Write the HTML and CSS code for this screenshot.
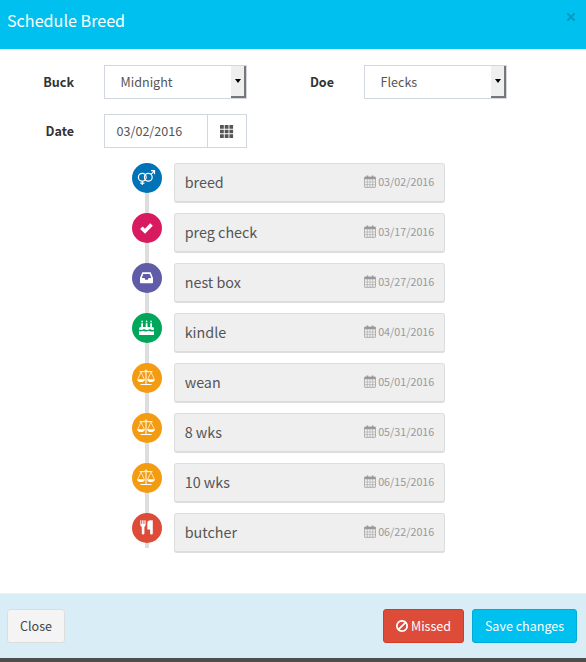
FILE: index.html
```html
<!DOCTYPE html>
<html lang="en">
<head>
<meta charset="utf-8">
<title>Schedule Breed</title>
<link rel="stylesheet" href="styles.css">
</head>
<body>
<svg class="defs" width="0" height="0">
  <symbol id="calendar" viewBox="0 0 12 13">
    <path d="M1 2h10q.6 0 .6.6v9q0 .7-.6.7H1q-.6 0-.6-.7v-9Q.4 2 1 2z" fill="none" stroke="currentColor" stroke-width=".8"/>
    <path d="M.5 2h11v2.200H.5zM2.600.4h1.600v3H2.600zM7.800.4h1.600v3H7.800z" fill="currentColor"/>
    <path d="M3.300 4v8M6 4v8M8.700 4v8M.5 7h11M.5 9.600h11" fill="none" stroke="currentColor" stroke-width=".5"/>
  </symbol>
  <symbol id="scale" viewBox="0 0 30 30">
    <g fill="none" stroke="#fff" stroke-width="1">
      <circle cx="14" cy="7.900" r=".9"/>
      <path d="M7.500 8.700h5.600M14.900 8.700h5.600M14 9v12.500M8.500 21.500h11"/>
      <path d="M9 9.200l-3.300 7M9 9.200l3.300 7M19 9.200l-3.300 7M19 9.200l3.300 7" stroke-width=".7"/>
    </g>
    <path d="M5 16.300h8q-.5 2.800-4 2.800t-4-2.800zM15 16.300h8q-.5 2.800-4 2.800t-4-2.800z" fill="#fff"/>
  </symbol>
</svg>
<div class="modal">
  <header class="modal-header">
    <h4>Schedule Breed</h4>
    <svg class="close" viewBox="0 0 10 10"><path d="M1.400 1.400l7.200 7.200M8.600 1.400L1.400 8.600"/></svg>
  </header>
  <main class="modal-body">
    <div class="form">
      <label>Buck</label>
      <div class="select"><span>Midnight</span><i class="arrow"></i></div>
      <label>Doe</label>
      <div class="select"><span>Flecks</span><i class="arrow"></i></div>
      <label>Date</label>
      <div class="date"><span>03/02/2016</span>
        <div class="addon"><svg width="14" height="13" viewBox="0 0 14 13"><path d="M0 0h3.800v3.700H0zM4.700 0h3.800v3.700H4.700zM9.400 0h3.700v3.700H9.400zM0 4.700h3.800v3.600H0zM4.700 4.700h3.800v3.600H4.700zM9.400 4.700h3.700v3.600H9.400zM0 9.300h3.800V13H0zM4.700 9.300h3.800V13H4.700zM9.400 9.300h3.700V13H9.400z" fill="#555"/></svg></div>
      </div>
    </div>
    <ul class="timeline">
      <li><svg class="dot blue" viewBox="0 0 30 30"><g fill="none" stroke="#fff" stroke-width="1.200"><circle cx="10.300" cy="14.200" r="3.900"/><circle cx="16.300" cy="14.200" r="3.900"/><path d="M10.300 18.100v4M8.200 20.200h4.200M19.100 11.400l3.300-3.500M19 7.700h3.500v3.500"/></g></svg>
        <div class="item"><span>breed</span><time><svg><use href="#calendar"/></svg>03/02/2016</time></div></li>
      <li><svg class="dot pink" viewBox="0 0 30 30"><path d="M9.400 14.700l3.600 3.500 6.500-6.700" fill="none" stroke="#fff" stroke-width="3.600"/></svg>
        <div class="item"><span>preg check</span><time><svg><use href="#calendar"/></svg>03/17/2016</time></div></li>
      <li><svg class="dot purple" viewBox="0 0 30 30"><path fill="#fff" fill-rule="evenodd" d="M10.300 9.300h8.400l2.300 5.700v4.500q0 .7-.7.700H8.700q-.7 0-.7-.7V15zM11.300 11L9.800 15h2.700l.8 1.800h2.500l.8-1.800h2.700L17.700 11z"/></svg>
        <div class="item"><span>nest box</span><time><svg><use href="#calendar"/></svg>03/27/2016</time></div></li>
      <li><svg class="dot green" viewBox="0 0 30 30"><path fill="#fff" d="M9.200 10.300h1.800V14H9.200zM13.700 10.300h1.800V14h-1.800zM18.200 10.300H20V14h-1.800zM9.300 9.300q-.3-.8.800-2 1.100 1.200.8 2zM13.800 9.300q-.3-.8.800-2 1.100 1.200.8 2zM18.300 9.300q-.3-.8.800-2 1.100 1.200.8 2zM7 15.500q0-1.500 1.500-1.500h12q1.500 0 1.500 1.500v1q-1.500 1.200-3 0-1-.8-2 0-2 1.200-4 0-1-.8-2 0-2 1.200-4 0zM7 18q2 1 3.700-.2 1 0 1.800.5 2 .7 4-.5 1 0 1.800.5 1.800.7 3.700-.3v4H7z"/></svg>
        <div class="item"><span>kindle</span><time><svg><use href="#calendar"/></svg>04/01/2016</time></div></li>
      <li><svg class="dot orange" viewBox="0 0 30 30"><use href="#scale"/></svg>
        <div class="item"><span>wean</span><time><svg><use href="#calendar"/></svg>05/01/2016</time></div></li>
      <li><svg class="dot orange" viewBox="0 0 30 30"><use href="#scale"/></svg>
        <div class="item"><span>8 wks</span><time><svg><use href="#calendar"/></svg>05/31/2016</time></div></li>
      <li><svg class="dot orange" viewBox="0 0 30 30"><use href="#scale"/></svg>
        <div class="item"><span>10 wks</span><time><svg><use href="#calendar"/></svg>06/15/2016</time></div></li>
      <li><svg class="dot red" viewBox="0 0 30 30"><path fill="#fff" d="M8.300 7.300h1V11h.9V7.300h1.300V11h.9V7.300h1.200V12q0 1.300-1.200 1.900v6.500q0 1.100-1.300 1.100t-1.300-1.100v-6.500Q8.300 13.300 8.300 12zM20.800 7.300v13.100q0 1.100-1.300 1.100t-1.400-1.100v-4h-2.800V10.500q0-3.200 3.200-3.200z"/></svg>
        <div class="item"><span>butcher</span><time><svg><use href="#calendar"/></svg>06/22/2016</time></div></li>
    </ul>
  </main>
  <footer class="modal-footer">
    <button class="btn close-btn">Close</button>
    <button class="btn danger"><svg viewBox="128 128 1536 1536"><path fill="#fff" d="M1440 893q0-161-87-295l-754 753q137 89 297 89 111 0 211.500-43.500t173.500-116.500 116-174.500 43-212.500zm-999 299l755-754q-135-91-300-91-148 0-273 73t-198 199-73 274q0 162 89 299zm1223-299q0 157-61 300t-163.500 246-245 164-298.500 61-298.500-61-245-164-163.500-246-61-300 61-299.500 163.500-245.500 245-164 298.500-61 298.500 61 245 164 163.500 245.500 61 299.500z"/></svg>Missed</button>
    <button class="btn info">Save changes</button>
  </footer>
</div>
</body>
</html>
```
FILE: styles.css
```css
* { box-sizing: border-box; }
body {
  margin: 0;
  height: 662px;
  overflow: hidden;
  background: #4d4d4d;
  font: 12.55px/20px "Noto Sans CJK SC", "Open Sans", sans-serif;
  color: #333;
}
.defs { position: absolute; }
.modal {
  display: flex;
  flex-direction: column;
  height: 658px;
  background: #fff;
}
.modal-header {
  display: flex;
  justify-content: space-between;
  height: 49px;
  padding: 8px 10px 0 7px;
  background: #00c0ef;
  color: #fff;
}
h4 { margin: 0; font-size: 16.15px; font-weight: 400; line-height: 25px; }
.close { width: 10px; height: 10px; margin-top: 4px; }
.close path { stroke: #0099bf; stroke-width: 2; }
.modal-body { flex: 1; padding-top: 16px; }
.form {
  display: grid;
  grid-template-columns: 74px 143px 57px 143px;
  column-gap: 30px;
  row-gap: 15px;
}
label { text-align: right; font-weight: 700; line-height: 33px; }
.select, .date {
  display: flex;
  height: 34px;
  border: 1px solid #d2d6de;
  line-height: 32px;
  color: #555;
}
.select { justify-content: space-between; padding-left: 15.600px; }
.date { justify-content: space-between; padding-left: 11.600px; }
.arrow {
  display: flex;
  align-items: center;
  justify-content: center;
  width: 15px;
  background: #efefef;
  border: solid #777;
  border-width: 0 2px 2px 0;
}
.arrow::before {
  content: "";
  border: solid transparent;
  border-width: 4px 3.500px 0;
  border-top-color: #000;
}
.addon {
  display: flex;
  align-items: center;
  justify-content: center;
  width: 39px;
  padding-top: 1px;
  border-left: 1px solid #d2d6de;
}
.timeline {
  display: flex;
  flex-direction: column;
  gap: 10px;
  width: 313px;
  height: 385px;
  margin: 15px 0 0 132px;
  padding: 0;
  list-style: none;
  background: linear-gradient(#ddd, #ddd) 13px 0 / 4px 100% no-repeat;
}
li { display: flex; gap: 12px; }
.dot { flex: none; width: 30px; height: 30px; border-radius: 50%; }
.blue { background: #0073b7; }
.pink { background: #d81b60; }
.purple { background: #605ca8; }
.green { background: #00a65a; }
.orange { background: #f39c12; }
.red { background: #dd4b39; }
.item {
  display: flex;
  flex: 1;
  justify-content: space-between;
  height: 40px;
  padding: 0 9.700px;
  border: 1px solid #ddd;
  border-bottom-width: 2px;
  border-radius: 3px;
  background: #efefef;
  color: #555;
  font-size: 14.35px;
  line-height: 35px;
}
time { display: flex; font-size: 10.75px; color: #999; }
time svg { width: 12px; height: 13px; margin: 11px 2px 0 0; }
.modal-footer {
  display: flex;
  gap: 8px;
  height: 65px;
  padding: 15px 9px 0 7px;
  border-top: 1px solid #f0f0f0;
  background: #d9edf7;
}
.btn {
  display: flex;
  align-items: center;
  justify-content: center;
  height: 34px;
  padding: 0;
  border: 1px solid;
  border-radius: 3px;
  font: inherit;
  color: #fff;
}
.btn svg { width: 12px; height: 12px; margin-right: 3px; }
.close-btn { width: 58px; margin-right: auto; background: #f4f4f4; border-color: #ddd; color: #444; }
.danger { width: 81px; background: #dd4b39; border-color: #d73925; }
.info { width: 105px; background: #00c0ef; border-color: #00acd6; }
```
